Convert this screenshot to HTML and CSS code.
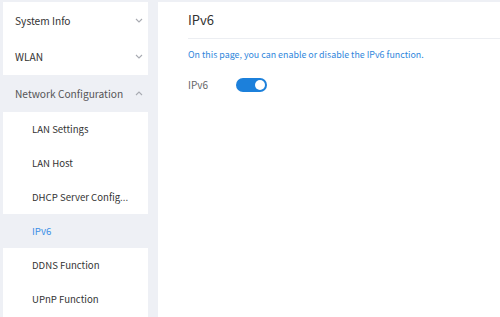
FILE: index.html
```html
<!DOCTYPE html>
<html lang="en">
<head>
    <meta charset="UTF-8">
    <title>IPv6</title>
    <link rel="stylesheet" href="styles.css">
</head>
<body>
    <div class="layout">
        <nav class="sidebar">
            <div class="menu-item">
                <span>System Info</span>
                <svg class="chevron" width="8" height="5" viewBox="0 0 8 5"><path d="M1 1l3 3 3-3" fill="none" stroke="#a8abb2" stroke-width="1.1"/></svg>
            </div>
            <div class="menu-item">
                <span>WLAN</span>
                <svg class="chevron" width="8" height="5" viewBox="0 0 8 5"><path d="M1 1l3 3 3-3" fill="none" stroke="#a8abb2" stroke-width="1.1"/></svg>
            </div>
            <div class="menu-item open">
                <span>Network Configuration</span>
                <svg class="chevron" width="8" height="5" viewBox="0 0 8 5"><path d="M1 4l3-3 3 3" fill="none" stroke="#a8abb2" stroke-width="1.1"/></svg>
            </div>
            <div class="sub-item">LAN Settings</div>
            <div class="sub-item">LAN Host</div>
            <div class="sub-item">DHCP Server Config...</div>
            <div class="sub-item active">IPv6</div>
            <div class="sub-item">DDNS Function</div>
            <div class="sub-item">UPnP Function</div>
        </nav>
        <main class="content">
            <div class="page-title">IPv6</div>
            <p class="tip">On this page, you can enable or disable the IPv6 function.</p>
            <div class="form-row">
                <label class="row-label">IPv6</label>
                <span class="switch on"><span class="knob"></span></span>
            </div>
        </main>
    </div>
</body>
</html>
```

FILE: styles.css
```css
body {
    margin: 0;
    background-color: #eef0f5;
    font-family: "Noto Sans CJK SC", "Noto Sans", sans-serif;
    font-size: 10px;
    color: #333;
}
.layout {
    display: flex;
    gap: 10px;
    padding: 2px 0 0 3px;
    height: 315px;
}
.sidebar {
    width: 145px;
    background: white;
    flex-shrink: 0;
}
.menu-item {
    height: 36.5px;
    display: flex;
    align-items: center;
    justify-content: space-between;
    padding: 0 5px 0 12px;
    font-size: 10.2px;
    color: #333;
}
.menu-item.open {
    background-color: #eef0f5;
    color: #555;
}
.chevron {
    display: block;
}
.sub-item {
    height: 34px;
    line-height: 34px;
    padding-left: 29px;
    font-size: 9.6px;
    color: #333;
}
.sub-item.active {
    background-color: #eef0f5;
    color: #3a8ee6;
}
.content {
    flex: 1;
    background: white;
    padding-left: 30px;
}
.page-title {
    height: 36px;
    line-height: 36px;
    font-size: 13px;
    color: #333;
    border-bottom: 1px solid #eceef2;
}
.tip {
    margin: 9px 0 0;
    font-size: 8.9px;
    color: #2f86dc;
}
.form-row {
    display: flex;
    align-items: center;
    margin-top: 16px;
}
.row-label {
    width: 48px;
    color: #666;
    font-size: 10px;
}
.switch {
    width: 31px;
    height: 14px;
    border-radius: 7px;
    background-color: #1c80db;
    position: relative;
}
.switch .knob {
    position: absolute;
    top: 2px;
    right: 2px;
    width: 10px;
    height: 10px;
    border-radius: 50%;
    background: white;
}
```
